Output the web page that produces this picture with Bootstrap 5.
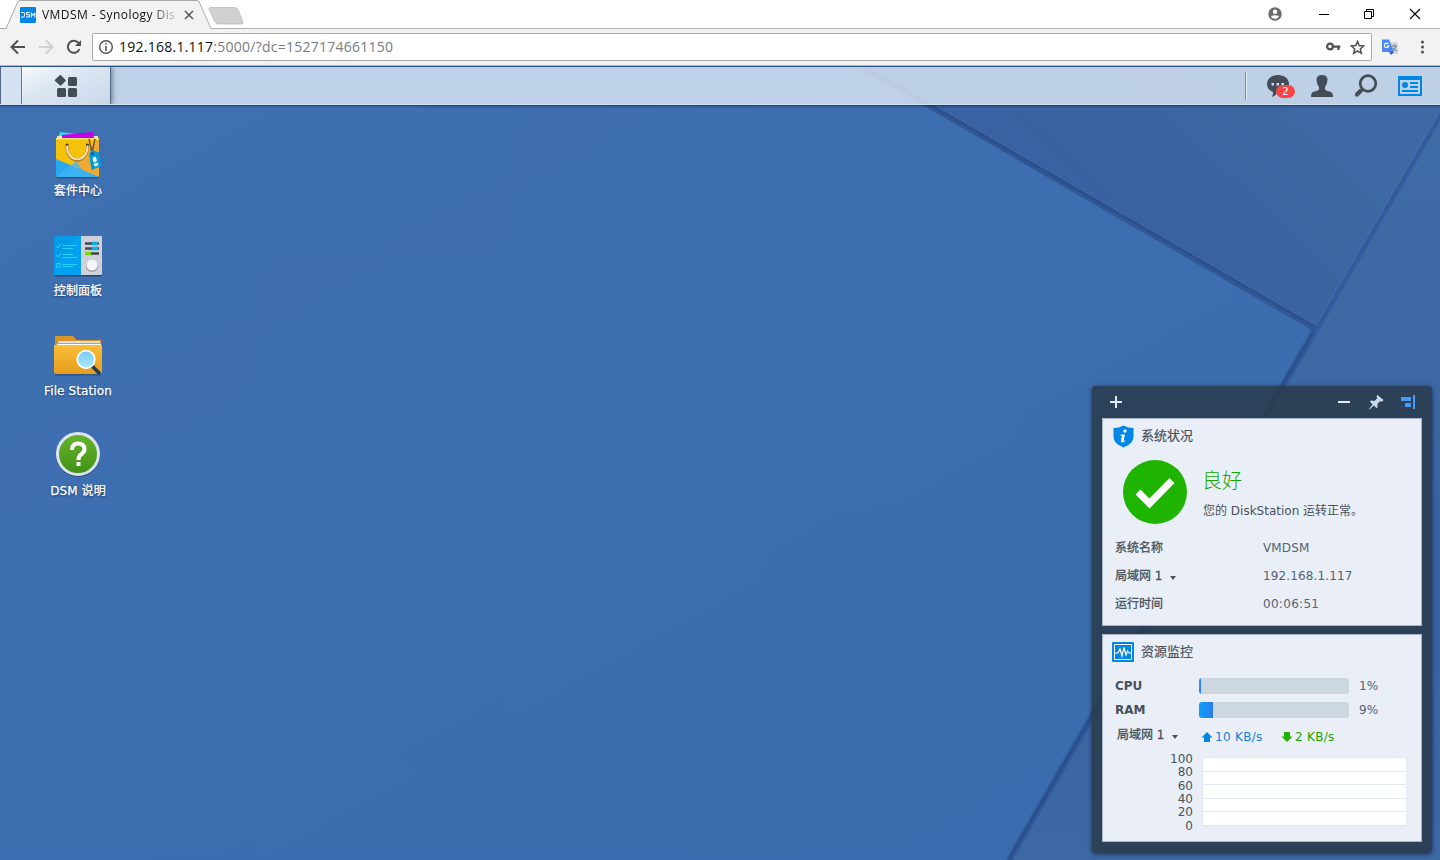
<!DOCTYPE html>
<html lang="zh-CN">
<head>
<meta charset="utf-8">
<title>VMDSM - Synology DiskStation</title>
<link href="https://cdn.jsdelivr.net/npm/bootstrap@5.3.0/dist/css/bootstrap.min.css" rel="stylesheet">
<script src="https://cdn.jsdelivr.net/npm/bootstrap@5.3.0/dist/js/bootstrap.bundle.min.js"></script>
<style>
body{width:1440px;height:860px;overflow:hidden;font:12px/16px "DejaVu Sans","Noto Sans CJK SC",sans-serif;color:#47515b}
svg{display:block;flex:none}
.chrome-font{font-family:"Open Sans","Noto Sans CJK SC",sans-serif}
.tabstrip{height:29px;background:#fff;border-bottom:1px solid #b0b0b0}
.tab-shape{height:29px;width:260px;left:0;top:0}
.tab-title{margin-left:6px;width:136px;height:20px;line-height:20px;font-size:12px;color:#111;white-space:nowrap;letter-spacing:.43px;-webkit-mask-image:linear-gradient(90deg,#000 108px,transparent 138px)}
.addressbar{height:37px;background:#f2f2f2;border-bottom:1px solid #b8b8b4;padding-left:10px}
.omnibox{width:1280px;height:28px;margin-left:10px;background:#fff;border:1px solid #aaa;border-radius:2px;padding:0 6px 0 5px}
.url{font-size:14px;line-height:20px;margin-left:5px;color:#777b82;white-space:nowrap;letter-spacing:.25px}
.url span{color:#111}
.desktop{height:794px}
.taskbar{height:39px;border-top:1px solid #2c5186;border-bottom:1px solid #d3e0f1;background:rgba(219,230,244,.82);box-shadow:0 1px 2px rgba(15,35,75,.75)}
.show-desk{width:22px;border-left:1px solid #556987;border-right:1px solid #66788e;background:rgba(230,238,248,.55)}
.main-menu{width:89px;background:linear-gradient(155deg,#f6f9fd 0,#dde7f3 40%,#c9d8ea 100%);border-right:1px solid #526781;box-shadow:2px 0 4px rgba(50,65,90,.45);clip-path:inset(0 -6px 0 0)}
.tray-line{width:2px;height:28px;border-left:1px solid #7c8ca2;border-right:1px solid #e4edf7}
.tray{width:44px}
.badge-count{left:20px;top:11px;width:19px;height:13px;border-radius:7px;background:#fb4545;color:#fff;font-size:10px;line-height:13px;text-align:center}
.launch{width:100px;height:100px;color:#fff;text-shadow:0 1px 2px rgba(10,30,70,.8);-webkit-text-stroke:.25px #fff;letter-spacing:.1px}
.launch span{line-height:16px;margin-top:1px}
.launch svg{margin-top:1px}
.widgets{right:8px;bottom:7px;width:340px;height:467px;background:rgba(42,58,76,.86);border-radius:4px;box-shadow:0 1px 4px rgba(15,30,65,.8);padding:0 10px 11px}
.widget-bar{height:32px;padding:0 6px 0 7px}
.pane{height:208px;background:#eaeff7;border:1px solid #a8b4c6}
.pane-title{font-size:13px;line-height:20px;-webkit-text-stroke:.2px #47515b}
.bolder{-webkit-text-stroke:.3px #47515b}
.info-row{height:28px;padding-left:12px}
.info-row>:first-child{width:148px}
.value{color:#536373;letter-spacing:.13px}
.time-value{letter-spacing:.3px}
.caret{width:0;height:0;border:3px solid transparent;border-top:4px solid #47515b;border-bottom:0;margin:3px 0 0 8px}
.good{font-size:20px;line-height:26px;font-weight:300;color:#1ba400;font-family:"Noto Sans CJK SC",sans-serif}
.meter-row{height:24px;padding-left:12px}
.meter-row>b{width:84px}
.meter{width:150px;height:16px;border-radius:3px;background:#cdd7e0}
.meter div{height:16px;background:linear-gradient(90deg,#0aa0ff,#2d7cea)}
.rate{letter-spacing:.3px}
.chart{width:205px;height:69px;border:1px solid #e0e9f3;background:#fff}
.chart div{flex:1;border-bottom:1px solid #e0e9f3}
.chart div:last-child{border:0}
.axis{width:90px;height:81px;text-align:right;color:#48525d}
.axis span{line-height:13.4px;display:block}
</style>
</head>
<body>
<header class="chrome-font">
  <div class="tabstrip d-flex position-relative">
    <svg class="tab-shape position-absolute" viewBox="0 0 260 29"><path d="M0 28.500H6L18 1.500Q18.500.5 20 .5H197Q198.500.5 199 1.500L211 28.500" fill="#f2f2f2" stroke="#aaa"/><path d="M7 28H210V29H7Z" fill="#f2f2f2"/><path d="M210 7.500H235Q237 7.500 238 9.500L243 22Q243.500 24 241.500 24H218Q216 24 215 22L209 9.500Q208.500 7.500 210 7.500Z" fill="#d0d0d0" stroke="#bbb" stroke-width=".8"/></svg>
    <div class="d-flex align-items-center position-relative w-100 ps-1 pt-1">
      <svg class="ms-3" width="16" height="16" viewBox="0 0 16 16" style="margin-top:-2px"><rect width="16" height="16" rx="1" fill="#0086e5"/><path d="M1 5.500H3.500Q4.500 5.500 4.500 6.500V9Q4.500 10 3.500 10H1M9.700 5.500H6.500V7.700H9.300V10H6M11.300 10.500V5.800L13 8.500L14.800 5.800V10.500" fill="none" stroke="#fff"/></svg>
      <div class="tab-title" style="margin-top:-2px">VMDSM - Synology Dis</div>
      <svg class="ms-1" width="14" height="14" viewBox="0 0 14 14" stroke="#555" stroke-width="1.500" style="margin-top:-2px"><path d="M3 3L11 11M11 3L3 11"/></svg>
      <div class="d-flex align-items-center ms-auto" style="margin-top:-5px">
        <svg width="14" height="14" viewBox="0 0 14 14" style="margin-right:36px"><circle cx="7" cy="7" r="6.700" fill="#6b6b6b"/><circle cx="7" cy="4.700" r="2.200" fill="#fff"/><path d="M2.800 9.600Q7 6.700 11.200 9.600Q9.500 12 7 12T2.800 9.600" fill="#fff"/></svg>
        <svg width="12" height="12" viewBox="0 0 12 12" style="margin-right:33px"><path d="M1 6.500H11" stroke="#000"/></svg>
        <svg width="12" height="12" viewBox="0 0 12 12" style="margin-right:34px" fill="none" stroke="#000"><path d="M1.500 3.500H8.500V10.500H1.500ZM3.500 3V1.500H10.500V8.500H9"/></svg>
        <svg width="12" height="12" viewBox="0 0 12 12" style="margin-right:19px" stroke="#000" stroke-width="1.100"><path d="M1 1L11 11M11 1L1 11"/></svg>
      </div>
    </div>
  </div>
  <div class="addressbar d-flex align-items-center">
    <svg width="16" height="16" viewBox="0 0 16 16" fill="none" stroke="#505050" stroke-width="2"><path d="M15 8H2M8 1.500L1.500 8L8 14.500"/></svg>
    <svg style="margin-left:12px" width="16" height="16" viewBox="0 0 16 16" fill="none" stroke="#d0d0d0" stroke-width="2"><path d="M1 8H14M8 1.500L14.500 8L8 14.500"/></svg>
    <svg style="margin-left:12px" width="16" height="16" viewBox="0 0 16 16"><path d="M13.500 10A6 6 0 1 1 12.500 4" fill="none" stroke="#505050" stroke-width="2"/><path d="M15 1V7H9Z" fill="#505050"/></svg>
    <div class="omnibox d-flex align-items-center">
      <svg width="16" height="16" viewBox="0 0 16 16"><circle cx="8" cy="8" r="6.300" fill="none" stroke="#505050" stroke-width="1.400"/><path d="M7.200 7H8.800V12H7.200ZM7.200 4.200H8.800V5.800H7.200Z" fill="#505050"/></svg>
      <div class="url"><span>192.168.1.117</span>:5000/?dc=1527174661150</div>
      <svg class="ms-auto" width="16" height="16" viewBox="0 0 16 16"><circle cx="5" cy="7.500" r="2.900" fill="none" stroke="#505050" stroke-width="2.200"/><path d="M8 6.500H15.300V8.800H14.500V11H12.300V8.800H8Z" fill="#505050"/></svg>
      <svg style="margin-left:9px" width="15" height="15" viewBox="0 0 15 15"><path d="M7.500 1.500L9.200 5.600L13.700 6L10.300 9L11.300 13.300L7.500 11L3.700 13.300L4.700 9L1.300 6L5.800 5.600Z" fill="none" stroke="#505050" stroke-width="1.500"/></svg>
    </div>
    <svg style="margin-left:9px" width="18" height="18" viewBox="0 0 18 18"><path d="M6 4H15.500Q17 4 17 5.500V15Q17 16 16 16H10Z" fill="#d4d7dc"/><path d="M1 1.500H8L13 14H2Q1 14 1 13Z" fill="#4c86f5"/><path d="M8 14H13L10 17Z" fill="#3458c8"/><path d="M7.500 6A2.300 2.300 0 1 0 7.800 8.200H5.800" fill="none" stroke="#fff" stroke-width="1.200"/><path d="M11 8H16M13.300 6.500V8M15 8Q14 12 11.500 13M12 9.500Q13 12 16 13" fill="none" stroke="#607d8b"/></svg>
    <svg style="margin-left:21px" width="6" height="16" viewBox="0 0 6 16" fill="#505050"><circle cx="2.500" cy="3" r="1.500"/><circle cx="2.500" cy="8" r="1.500"/><circle cx="2.500" cy="13" r="1.500"/></svg>
  </div>
</header>

<main class="desktop position-relative overflow-hidden">
  <!-- wallpaper -->
  <svg class="position-absolute top-0 start-0" width="1440" height="794" viewBox="0 66 1440 794">
    <defs>
      <linearGradient id="tri" gradientUnits="userSpaceOnUse" x1="1120" y1="230" x2="1280" y2="60"><stop stop-color="#3961a3"/><stop offset=".5" stop-color="#3b659f"/><stop offset="1" stop-color="#3d6aa3"/></linearGradient>
      <linearGradient id="side" x1="0" y1="0" x2="0" y2="1"><stop stop-color="#3e6ca6"/><stop offset=".35" stop-color="#3d68a2"/><stop offset=".6" stop-color="#3a61a1"/><stop offset="1" stop-color="#3c68a4"/></linearGradient>
      <linearGradient id="base" x1="0" y1="0" x2="1" y2="1"><stop stop-color="#3e70b2"/><stop offset="1" stop-color="#3a6bb0"/></linearGradient>
      <pattern id="weave" width="4" height="4" patternUnits="userSpaceOnUse"><path d="M0 0h1v1h-1zM2 2h1v1h-1z" fill="#1c448b" opacity=".13"/><path d="M2 0h1v1h-1zM0 2h1v1h-1z" fill="#7aa5df" opacity=".1"/></pattern>
      <filter id="soft"><feGaussianBlur stdDeviation="1.100"/></filter>
    </defs>
    <rect y="66" width="1440" height="794" fill="url(#base)"/>
    <path d="M1440 112L1008 860H1440Z" fill="url(#side)"/>
    <path d="M865 66L1316 326L1440 112V66Z" fill="url(#tri)"/>
    <path d="M855 66H865L1316 326L1313 331Z" fill="#325896"/>
    <path d="M1316 326L1440 112V121L1013 860H1008L1313 331Z" fill="#335a9d"/>
    <g fill="none">
      <path d="M865 67L1316 327" stroke="#233f79" stroke-width="2" opacity=".6" filter="url(#soft)"/>
      <path d="M1313 331L1008 860" stroke="#1d3c74" stroke-width="2.500" opacity=".75" filter="url(#soft)"/>
      <path d="M866 65L1316 325L1440 111" stroke="#5b80b8" opacity=".4"/>
    </g>
    <rect y="66" width="1440" height="794" fill="url(#weave)"/>
  </svg>

  <nav class="taskbar d-flex position-relative">
    <div class="show-desk"></div>
    <div class="main-menu d-flex justify-content-center align-items-center">
      <svg width="24" height="24" viewBox="0 0 24 24" fill="#434c57"><path d="M6.500.8L11.500 5.800Q12 6.500 11.500 7L7 11.500Q6.500 12 6 11.500L1 7Q.5 6.500 1 5.800L6 .9Z"/><rect x="14" y="3" width="9" height="9" rx="1.500"/><rect x="3" y="14" width="9" height="9" rx="1.500"/><rect x="14" y="14" width="9" height="9" rx="1.500"/></svg>
    </div>
    <div class="d-flex align-items-center ms-auto" style="padding-right:8px">
      <div class="tray-line" style="margin-right:9px"></div>
      <div class="tray position-relative d-flex justify-content-center">
        <svg width="24" height="24" viewBox="0 0 24 24"><path d="M12 1C5.500 1 1 4.800 1 10C1 14 3.500 16.800 7 18Q7.500 21 5.500 23Q9 22.500 11 18.800C18 19 23 15.500 23 10C23 4.800 18.500 1 12 1Z" fill="#434c57"/><path d="M5.500 9h2.500v2.500h-2.500zM10.500 9h2.500v2.500h-2.500zM15.500 9h2.500v2.500h-2.500z" fill="#d5dfeb"/></svg>
        <span class="badge-count position-absolute">2</span>
      </div>
      <div class="tray d-flex justify-content-center"><svg width="24" height="24" viewBox="0 0 24 24"><path d="M12 1Q6.500 1 6.500 6Q6.700 10 9 13Q9.800 15.500 8 16.500L3 18Q1 19 1 23H23Q23 19 21 18L16 16.500Q14.200 15.500 15 13Q17.300 10 17.500 6Q17.500 1 12 1Z" fill="#434c57"/></svg></div>
      <div class="tray d-flex justify-content-center"><svg width="24" height="24" viewBox="0 0 24 24" fill="none" stroke="#434c57"><circle cx="14" cy="9.500" r="7.800" stroke-width="2.700"/><path d="M9 15L7 17" stroke-width="2.600"/><path d="M6.500 17L3 20.500" stroke-width="4.200" stroke-linecap="round"/></svg></div>
      <div class="tray d-flex justify-content-center"><svg width="24" height="20" viewBox="0 0 24 20"><path d="M0 0H24V20H0ZM2 4V18H22V4Z" fill="#0086e5" fill-rule="evenodd"/><circle cx="7" cy="9" r="3" fill="#0086e5"/><path d="M12 7H20M12 11H20M4 15H20" stroke="#0086e5" stroke-width="2"/></svg></div>
    </div>
  </nav>

  <section class="d-flex flex-column position-relative" style="padding:24px 0 0 28px">
    <div class="launch d-flex flex-column align-items-center">
      <svg width="50" height="52" viewBox="0 0 50 52"><defs><clipPath id="bagclip"><path d="M3 8H46V45Q46 47 44 47H5Q3 47 3 45Z"/></clipPath></defs><rect x="3" y="12" width="43" height="36.500" rx="2" fill="#173763" opacity=".5"/><path d="M7 2L24 4V8H5Z" fill="#36d7e7"/><path d="M4 6H45V9H4Z" fill="#e8e3cf"/><path d="M9 5L40 2L41 8H9Z" fill="#c400eb"/><g clip-path="url(#bagclip)"><path d="M3 8H46V47H3Z" fill="#f4c20b"/><path d="M46 8V47H40L20 35Z" fill="#efaa31"/><path d="M3 29L46 47H3Z" fill="#27a9f1"/><path d="M3 47L23 31L30 40L42 47Z" fill="#45b6f4" opacity=".7"/></g><path d="M3 8H46V9.500H3Z" fill="#ffe471"/><circle cx="14" cy="15" r="1.600" fill="#453625"/><circle cx="34.500" cy="15" r="1.600" fill="#453625"/><path d="M14 16C13.500 35 35 35 34.500 16" fill="none" stroke="#ad7a19" stroke-width="2.800"/><path d="M14 15.500C13.500 34 35 34 34.500 15.500" fill="none" stroke="#f7dfbb" stroke-width="1.900"/><path d="M36 9L39 23L42 9" fill="none" stroke="#715324" stroke-width="1.500"/><path d="M36 24L39 20L46 22.500L49 36L38.500 40Z" fill="#0799dc"/><circle cx="39.500" cy="23.500" r="1.300" fill="#07547c"/><path d="M40 28L42.500 27L43.500 31L41 32ZM41 34L44.500 33L45 35L42 36Z" fill="#e6f7ff" stroke="#e6f7ff"/></svg>
      <span>套件中心</span>
    </div>
    <div class="launch d-flex flex-column align-items-center">
      <svg width="50" height="52" viewBox="0 0 50 52"><rect x="1" y="8" width="48" height="38.500" rx="2" fill="#183557" opacity=".7"/><path d="M2 6H28V45H2Q1 45 1 44V7Z" fill="#0799e9"/><path d="M1 39L23 6H28V45H1Z" fill="#00a9f6" opacity=".55"/><path d="M28 6H48Q49 6 49 7V44Q49 45 48 45H28Z" fill="#ced1d8"/><g fill="none" stroke="#22d3f7" stroke-width="1"><path d="M3 16L5 18L8 14M9.500 15.500H24M9.500 18.500H20M3 25L5 27L8 23M9.500 24.500H20M9.500 27.500H24M3.500 33.500H7V37H3.500ZM9.500 34.500H24M9.500 36.500H20"/></g><path d="M32 13.500H46M32 18.500H46M32 23.500H46" stroke="#44474e" stroke-width="2.400"/><path d="M39 13.500H45M39 18.500H45" stroke="#05b2ed" stroke-width="3.400"/><path d="M32 23.500H38" stroke="#78dc00" stroke-width="3.400"/><circle cx="39" cy="36" r="6" fill="#999eaa"/><circle cx="39" cy="35" r="5.500" fill="#f5f7fa"/></svg>
      <span>控制面板</span>
    </div>
    <div class="launch d-flex flex-column align-items-center">
      <svg width="50" height="52" viewBox="0 0 50 52"><defs><linearGradient id="folder" x2="0" y2="1"><stop stop-color="#f9bd36"/><stop offset="1" stop-color="#e79d1e"/></linearGradient><linearGradient id="lens" x2="0" y2="1"><stop stop-color="#75c7f5"/><stop offset="1" stop-color="#acecff"/></linearGradient></defs><path d="M2 44H48V45.500H2Z" fill="#25456e" opacity=".6"/><path d="M2 7Q2 6 3 6H19Q21 6 22 8L23 10H48V34H2Z" fill="#d99526"/><path d="M4 11H47V17H4Z" fill="#8c8677"/><path d="M5 12H47M4 14.500H48" stroke="#fff" stroke-width="1.500"/><path d="M1 16Q1 15 2 15H48Q49 15 49 16V42Q49 44 47 44H3Q1 44 1 42Z" fill="url(#folder)"/><path d="M39 36L47 44" stroke="#243d51" stroke-width="3.500"/><circle cx="33" cy="29.500" r="8.800" fill="url(#lens)" stroke="#fff" stroke-width="1.800"/></svg>
      <span>File Station</span>
    </div>
    <div class="launch d-flex flex-column align-items-center">
      <svg width="50" height="52" viewBox="0 0 50 52"><defs><linearGradient id="help" x2="0" y2="1"><stop stop-color="#68b52c"/><stop offset="1" stop-color="#409018"/></linearGradient></defs><circle cx="25" cy="25" r="22" fill="#19375e" opacity=".6"/><circle cx="25" cy="24" r="20.500" fill="url(#help)" stroke="#dce5ef" stroke-width="3"/><path d="M19 20Q19 13.500 25 13.500T31.500 19Q31.500 22 28.500 24T25.500 30" fill="none" stroke="#fff" stroke-width="4"/><rect x="23.500" y="32" width="4" height="4" fill="#fff"/></svg>
      <span>DSM 说明</span>
    </div>
  </section>

  <aside class="widgets position-absolute d-flex flex-column">
    <div class="widget-bar d-flex align-items-center">
      <svg width="14" height="14" viewBox="0 0 14 14" stroke="#e2eaf3" stroke-width="2"><path d="M1 7H13M7 1V13"/></svg>
      <svg class="ms-auto" width="14" height="14" viewBox="0 0 14 14" stroke="#e2eaf3" stroke-width="2"><path d="M1 7H13"/></svg>
      <svg style="margin-left:17px" width="16" height="16" viewBox="0 0 16 16"><path d="M9.500 1L15.500 6L14 7.700L12 7.300L9.500 9.800L9.500 13.500L8.500 14L5.800 11.500L1.500 15.500L1 15L4.500 10.500L2 7.500L3 6.500L6.500 7L9.500 4L8.300 2.500Z" fill="#cbd8e7"/></svg>
      <svg style="margin-left:16px" width="16" height="16" viewBox="0 0 16 16" fill="#459bf6"><path d="M1 3H11V7H1ZM5 9H11V13H5ZM13 1H15V15H13Z"/></svg>
    </div>
    <div class="pane">
      <div class="d-flex align-items-center" style="padding:6px 0 0 10px;height:28px">
        <svg width="21" height="23" viewBox="0 0 21 23"><path d="M10.500.5Q15 3 20.500 3V12Q20.500 18.500 10.500 22.500Q.5 18.500.5 12V3Q6 3 10.500.5Z" fill="#0086e5"/><circle cx="12" cy="6" r="1.700" fill="#fff"/><path d="M7.800 9.500H12L10.500 16Q11.500 16 13 14.800Q11.700 17.500 9 17.500Q7.500 17.500 8 15.500L9 11H7.500Z" fill="#fff"/></svg>
        <span class="pane-title" style="margin-left:7px">系统状况</span>
      </div>
      <div class="d-flex" style="padding:13px 0 0 20px">
        <svg width="64" height="64" viewBox="0 0 64 64"><circle cx="32" cy="32" r="32" fill="#1fb400"/><path d="M15 32L26.500 43.500L49 20.500" fill="none" stroke="#fff" stroke-width="7"/></svg>
        <div style="margin-left:16px"><div class="good" style="margin:7px 0 0 -1px">良好</div><div class="text-nowrap" style="margin-top:10px">您的 DiskStation 运转正常。</div></div>
      </div>
      <div style="padding-top:10px">
        <div class="info-row d-flex align-items-center"><span class="bolder">系统名称</span><span class="value">VMDSM</span></div>
        <div class="info-row d-flex align-items-center"><span class="bolder d-flex align-items-center">局域网 1<i class="caret"></i></span><span class="value">192.168.1.117</span></div>
        <div class="info-row d-flex align-items-center"><span class="bolder">运行时间</span><span class="value time-value">00:06:51</span></div>
      </div>
    </div>
    <div class="pane mt-2">
      <div class="d-flex align-items-center" style="padding:6px 0 0 9px;height:28px">
        <svg width="22" height="20" viewBox="0 0 22 20"><rect width="22" height="20" rx="1" fill="#0086e5"/><path d="M2.500 2.500H19.500V17.500H2.500Z" fill="none" stroke="#fff"/><path d="M3 11H6L8 7L10 14L12 5.500L14 13L15.500 9L17 11H19" fill="none" stroke="#fff" stroke-width="1.200"/></svg>
        <span class="pane-title" style="margin-left:7px">资源监控</span>
      </div>
      <div style="padding-top:11px">
        <div class="meter-row d-flex align-items-center"><b>CPU</b><div class="meter overflow-hidden"><div style="width:1.330%"></div></div><span class="value" style="margin-left:10px">1%</span></div>
        <div class="meter-row d-flex align-items-center"><b>RAM</b><div class="meter overflow-hidden"><div style="width:9.330%"></div></div><span class="value" style="margin-left:10px">9%</span></div>
      </div>
      <div class="d-flex align-items-center" style="height:30px;padding-left:14px">
        <span class="bolder d-flex align-items-center" style="width:84px;margin-top:-4px">局域网 1<i class="caret"></i></span>
        <svg width="12" height="12" viewBox="0 0 12 12"><path d="M6 1L11.500 6.500H9V11H3V6.500H.5Z" fill="#0086e5"/></svg><span class="rate" style="width:67px;margin-left:2px;color:#127fe2">10 KB/s</span>
        <svg style="margin-left:-1px" width="12" height="12" viewBox="0 0 12 12"><path d="M3 1H9V5.500H11.500L6 11L.5 5.500H3Z" fill="#1fb400"/></svg><span class="rate" style="margin-left:2px;color:#1ba400">2 KB/s</span>
      </div>
      <div class="d-flex">
        <div class="axis" style="padding-top:.7px"><span>100</span><span>80</span><span>60</span><span>40</span><span>20</span><span>0</span></div>
        <div class="chart d-flex flex-column" style="margin:5px 0 0 9px"><div></div><div></div><div></div><div></div><div></div></div>
      </div>
    </div>
  </aside>
</main>
</body>
</html>
